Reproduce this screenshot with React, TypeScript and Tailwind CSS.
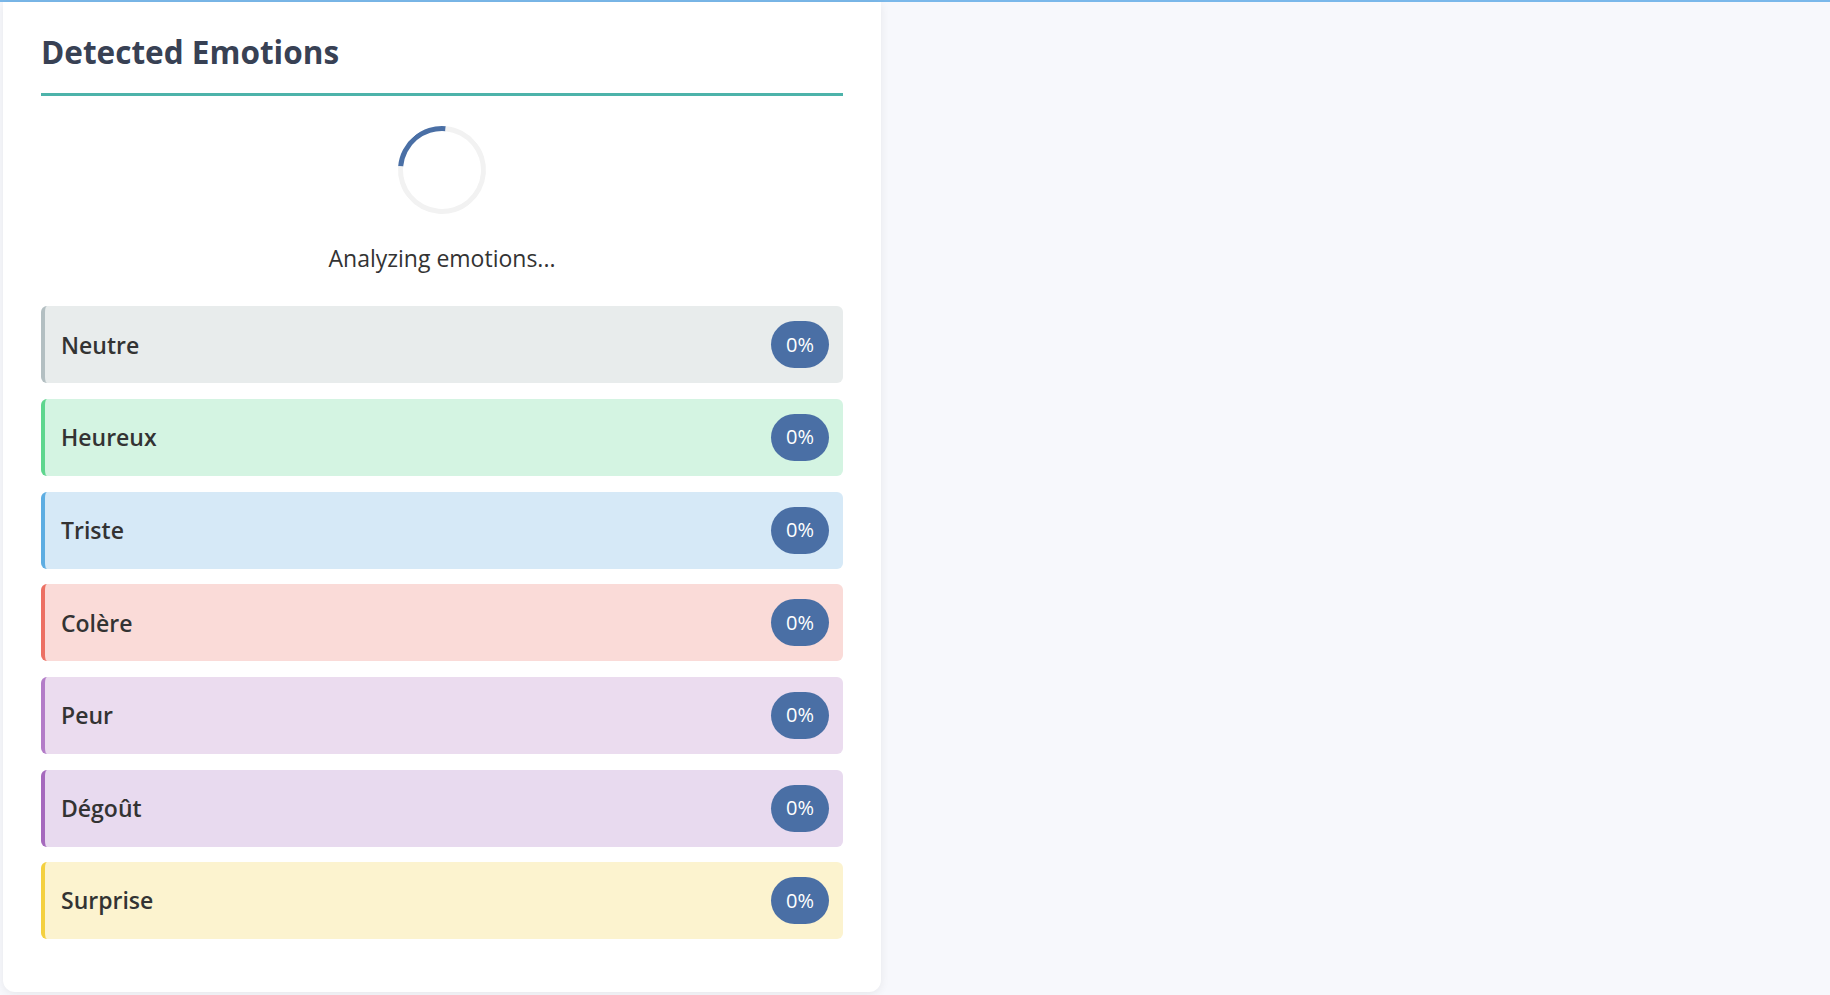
import React from "react";

interface Emotion {
  label: string;
  value: number;
  bg: string;
  border: string;
}

const emotions: Emotion[] = [
  { label: "Neutre", value: 0, bg: "bg-[#e8ecec]", border: "border-[#b3bfc2]" },
  { label: "Heureux", value: 0, bg: "bg-[#d4f4e2]", border: "border-[#5ed68e]" },
  { label: "Triste", value: 0, bg: "bg-[#d6e9f7]", border: "border-[#5dade2]" },
  { label: "Colère", value: 0, bg: "bg-[#fadbd8]", border: "border-[#ec7063]" },
  { label: "Peur", value: 0, bg: "bg-[#ebdcef]", border: "border-[#b37cc8]" },
  { label: "Dégoût", value: 0, bg: "bg-[#e8daef]", border: "border-[#a569bd]" },
  { label: "Surprise", value: 0, bg: "bg-[#fcf3cf]", border: "border-[#f4d03f]" },
];

function EmotionRow({ emotion }: { emotion: Emotion }) {
  return (
    <div
      className={`flex h-[77px] items-center justify-between rounded-[6px] border-l-[4px] pl-[16px] pr-[14px] ${emotion.bg} ${emotion.border}`}
    >
      <span className="text-[23px] font-semibold text-[#333333]">{emotion.label}</span>
      <span className="flex h-[47px] w-[58px] items-center justify-center rounded-full bg-[#4a6fa5] text-[20px] font-medium text-white">
        {emotion.value}%
      </span>
    </div>
  );
}

export default function App() {
  return (
    <div
      className="min-h-[995px] bg-[#f7f8fc]"
      style={{ fontFamily: '"Open Sans", "Noto Sans", sans-serif' }}
    >
      <div className="h-[2px] w-full bg-[#7ab8ea]" />
      <div className="ml-[3px] w-[878px] rounded-b-[12px] bg-white px-[38px] pb-[53px] pt-[31px] shadow-[0_2px_10px_rgba(0,0,0,0.07)]">
        {/* Header */}
        <h2 className="border-b-[3px] border-[#4db3aa] pb-[22px] text-[31.5px] font-bold leading-[1.2] text-[#384154]">
          Detected Emotions
        </h2>

        {/* Loading state */}
        <div className="flex flex-col items-center pt-[30px]">
          <div className="h-[88px] w-[88px] rotate-[-40deg] rounded-full border-[5px] border-[#f2f2f2] border-t-[#4a6fa5]" />
          <p className="mt-[27px] text-[23px] text-[#333333]">Analyzing emotions...</p>
        </div>

        {/* Emotion list */}
        <div className="mt-[31px] flex flex-col gap-[15.67px]">
          {emotions.map((e) => (
            <EmotionRow key={e.label} emotion={e} />
          ))}
        </div>
      </div>
    </div>
  );
}
